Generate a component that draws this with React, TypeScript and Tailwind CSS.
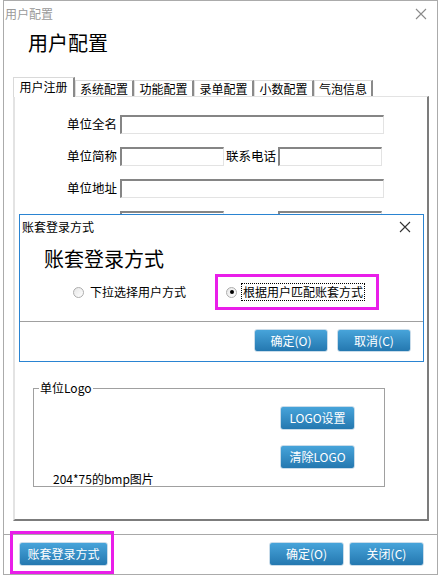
import React from "react";

const tabs = [
  { title: "用户注册", w: "w-[62px]" },
  { title: "系统配置", w: "w-[59px]" },
  { title: "功能配置", w: "w-[60px]" },
  { title: "录单配置", w: "w-[60px]" },
  { title: "小数配置", w: "w-[60px]" },
  { title: "气泡信息", w: "w-[59px]" },
];

function BlueButton({ label, w = "w-[75px]", h = "h-[24px]" }: { label: string; w?: string; h?: string }) {
  return (
    <button
      className={`${w} ${h} flex items-center justify-center rounded-[3px] border border-[#c9dcea] bg-linear-to-b from-[#47a4da] to-[#2478b0] text-white text-[12px] leading-none`}
    >
      {label}
    </button>
  );
}

function Input({ w }: { w: string }) {
  return (
    <div className={`${w} h-[19px] border-t-2 border-l-2 border-t-[#858585] border-l-[#858585] border-r border-b border-r-[#e3e3e3] border-b-[#e3e3e3] bg-white`} />
  );
}

function CloseX({ color = "#8a8a8a" }: { color?: string }) {
  return (
    <svg width="12" height="12" viewBox="0 0 12 12">
      <path d="M1 1 L11 11 M11 1 L1 11" stroke={color} strokeWidth="1.1" />
    </svg>
  );
}

function Radio({ checked }: { checked?: boolean }) {
  return (
    <span className="w-[11px] h-[11px] rounded-full border border-[#adadad] bg-linear-to-br from-[#e6e6e6] to-white flex items-center justify-center">
      {checked && <span className="w-[4px] h-[4px] rounded-full bg-black" />}
    </span>
  );
}

export default function App() {
  return (
    <div className="relative w-[441px] h-[577px] bg-white overflow-hidden font-['Noto_Sans_CJK_SC',sans-serif] text-black">
      {/* 主窗口 */}
      <div className="ml-[3px] w-[435px] h-[575px] border border-[#ababab] flex flex-col">
        {/* 标题栏 */}
        <div className="h-[26px] flex items-center justify-between pl-[1px] pr-[10px]">
          <span className="text-[12px] leading-none text-[#9a9a9a]">用户配置</span>
          <CloseX />
        </div>

        <div className="pt-[4px] pl-[24px]">
          <span className="text-[20px] leading-[24px]">用户配置</span>
        </div>

        {/* 选项卡 */}
        <div className="mt-[21px] ml-[9px] flex items-end h-[19px]">
          {tabs.map((t, i) =>
            i === 0 ? (
              <div
                key={i}
                className={`${t.w} h-[20px] -mb-px relative z-10 bg-white border-l border-t border-[#d9d9d9] border-r-2 border-r-[#8a8a8a] flex items-center justify-center text-[12px] leading-none pb-[2px]`}
              >
                {t.title}
              </div>
            ) : (
              <div
                key={i}
                className={`${t.w} h-[16px] bg-white border-l border-t border-[#dcdcdc] border-r-2 border-r-[#8a8a8a] flex items-center justify-center text-[12px] leading-none`}
              >
                {t.title}
              </div>
            )
          )}
        </div>

        {/* 选项卡内容 */}
        <div className="ml-[9px] w-[416px] h-[425px] border-l-2 border-t border-l-[#e3e3e3] border-t-[#e3e3e3] border-r-2 border-b-2 border-r-[#7c7c7c] border-b-[#7c7c7c] pt-[18px] flex flex-col">
          <div className="flex flex-col gap-[13px] text-[12.5px] leading-none">
            <div className="flex items-center">
              <span className="w-[102px] text-right">单位全名</span>
              <span className="w-[3px]" />
              <Input w="w-[264px]" />
            </div>
            <div className="flex items-center">
              <span className="w-[102px] text-right">单位简称</span>
              <span className="w-[3px]" />
              <Input w="w-[104px]" />
              <span className="w-[54px] text-right pr-[2px]">联系电话</span>
              <Input w="w-[104px]" />
            </div>
            <div className="flex items-center">
              <span className="w-[102px] text-right">单位地址</span>
              <span className="w-[3px]" />
              <Input w="w-[264px]" />
            </div>
            {/* 被对话框遮住的一行 */}
            <div className="flex items-center">
              <span className="w-[105px]" />
              <Input w="w-[104px]" />
              <span className="w-[54px]" />
              <Input w="w-[104px]" />
            </div>
          </div>

          {/* 单位Logo */}
          <div className="relative mt-[158px] ml-[18px] w-[352px] h-[99px] border border-[#a0a0a0] flex flex-col">
            <span className="absolute -top-[8px] left-[5px] bg-white px-[1px] text-[12px] leading-[14px]">单位Logo</span>
            <div className="pt-[17px] pr-[29px] flex flex-col items-end gap-[15px]">
              <BlueButton label="LOGO设置" />
              <BlueButton label="清除LOGO" />
            </div>
            <span className="mt-[3px] pl-[19px] text-[12px] leading-[14px]">204*75的bmp图片</span>
          </div>
        </div>

        {/* 底部 */}
        <div className="mt-[13px] border-t border-[#a8a8a8] pt-[7px] pl-[15px] pr-[13px] flex items-center">
          <BlueButton label="账套登录方式" w="w-[89px]" />
          <div className="ml-auto flex gap-[5px]">
            <BlueButton label="确定(O)" />
            <BlueButton label="关闭(C)" />
          </div>
        </div>
      </div>

      {/* 标注框 */}
      <div className="absolute left-[10px] top-[531px] w-[104px] h-[43px] border-[3px] border-[#e91ee9]" />

      {/* 账套登录方式 对话框 */}
      <div className="absolute left-[19px] top-[214px] w-[405px] h-[148px] border border-[#2a84d2] bg-white flex flex-col">
        <div className="h-[24px] flex items-center justify-between pl-[2px] pr-[12px]">
          <span className="text-[12px] leading-none">账套登录方式</span>
          <CloseX color="#333" />
        </div>
        <div className="pt-[8px] pl-[24px]">
          <span className="text-[20px] leading-[24px]">账套登录方式</span>
        </div>
        <div className="mt-[2px] flex items-center pl-[53px] text-[12px] leading-none">
          <div className="w-[142px] flex items-center gap-[6px]">
            <Radio />
            <span>下拉选择用户方式</span>
          </div>
          <div className="w-[164px] h-[36px] border-[3px] border-[#e91ee9] flex items-center pl-[8px] gap-[4px]">
            <Radio checked />
            <span className="border border-dotted border-black px-[1px] py-[2px]">根据用户匹配账套方式</span>
          </div>
        </div>
        <div className="mt-[11px] border-t border-[#a0a0a0] pt-[7px] pr-[12px] flex justify-end gap-[9px]">
          <BlueButton label="确定(O)" w="w-[74px]" h="h-[23px]" />
          <BlueButton label="取消(C)" w="w-[74px]" h="h-[23px]" />
        </div>
      </div>
    </div>
  );
}
